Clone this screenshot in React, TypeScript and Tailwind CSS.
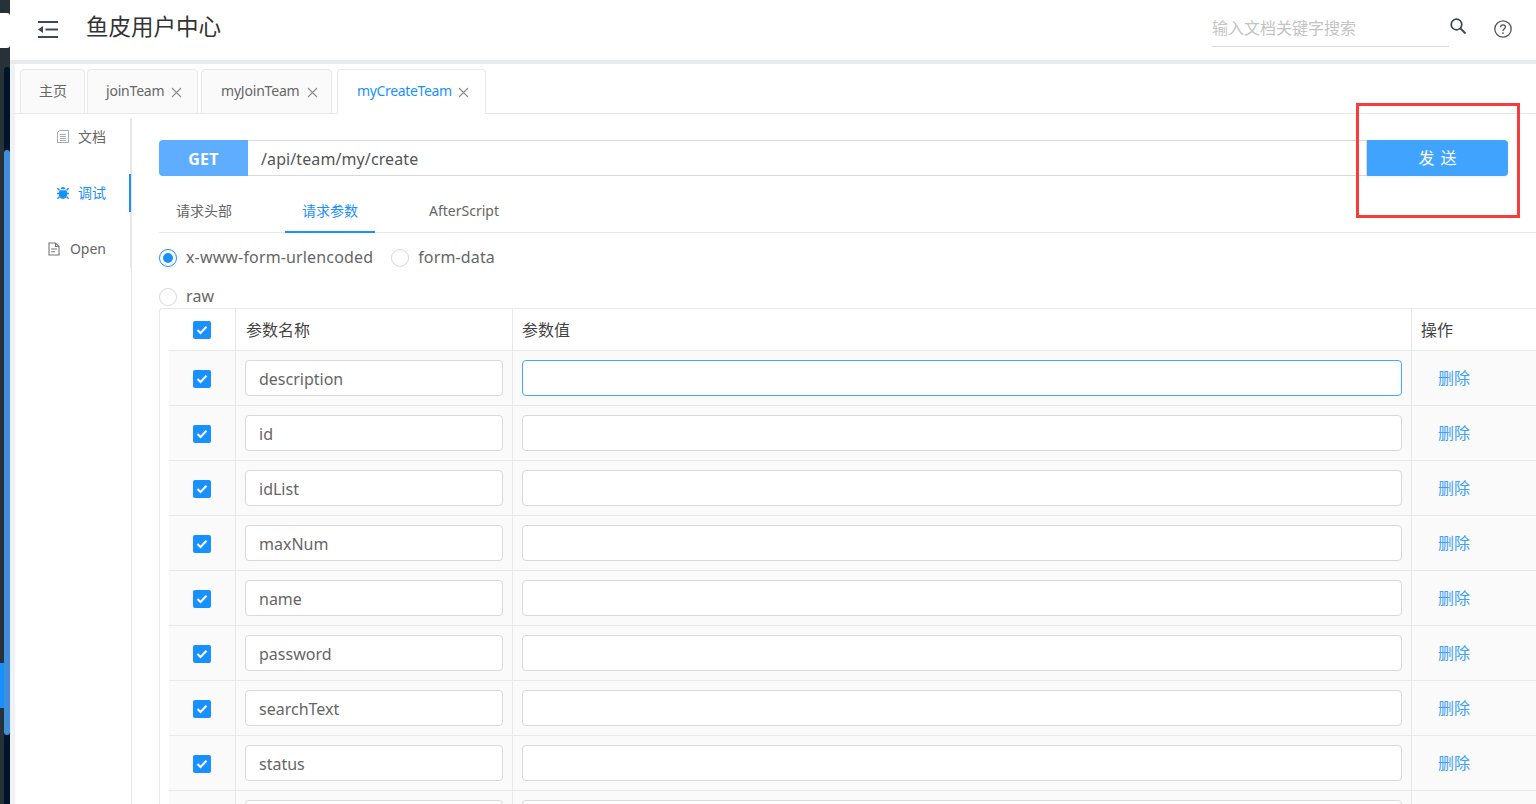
import React from "react";

const rows = ["description", "id", "idList", "maxNum", "name", "password", "searchText", "status", ""];

function Check() {
  return (
    <span className="flex h-[18px] w-[18px] items-center justify-center rounded-[2px] bg-[#1890ff]">
      <svg width="12" height="10" viewBox="0 0 12 10" fill="none">
        <path d="M1.5 5l3 3 6-6.2" stroke="#fff" strokeWidth="2" />
      </svg>
    </span>
  );
}

function Radio({ on, label }: { on?: boolean; label: string }) {
  return (
    <span className="flex items-center">
      <span className={`flex h-[18px] w-[18px] items-center justify-center rounded-full border ${on ? "border-[#1890ff]" : "border-[#d9d9d9]"}`}>
        {on && <span className="h-[10px] w-[10px] rounded-full bg-[#1890ff]" />}
      </span>
      <span className="-mt-[2px] ml-[9px] text-[16px] tracking-[0.15px] text-[#666]">{label}</span>
    </span>
  );
}

function Close({ cls }: { cls: string }) {
  return (
    <svg width="11" height="11" viewBox="0 0 11 11" className={`mt-[4px] ${cls}`} fill="none">
      <path d="M1 1l9 9M10 1l-9 9" stroke="#8c8c8c" strokeWidth="1.1" />
    </svg>
  );
}

function Tab({ label, w, active, closeCls, cls }: { label: string; w: string; active?: boolean; closeCls?: string; cls: string }) {
  return (
    <div
      className={`-mb-px flex h-[45px] items-center rounded-t-[4px] border border-[#e8e8e8] pb-[2px] text-[14px] ${w} ${cls} ${
        active ? "border-b-white bg-white text-[#1890ff]" : "bg-[#fafafa] text-[#666]"
      }`}
    >
      {label}
      {closeCls && <Close cls={closeCls} />}
    </div>
  );
}

export default function App() {
  return (
    <div className="relative flex h-[804px] w-[1536px] overflow-hidden bg-white font-['Noto_Sans','Noto_Sans_CJK_SC',sans-serif]">
      {/* window edge */}
      <div className="flex h-full w-[10px] shrink-0">
        <div className="flex w-[4px] flex-col bg-[#263238]">
          <div className="mt-[13px] h-[35px] bg-white" />
          <div className="mt-[615px] h-[45px] bg-[#1890ff]" />
        </div>
        <div className="w-[6px] bg-[#263238]">
          <div className="mt-[13px] h-[35px] rounded-r-[3px] bg-white" />
          <div className="mt-[19px] h-[737px] rounded-t-[3px] bg-[#001529]">
            <div className="relative top-[83px] h-[585px] rounded-[3px] bg-[#418fdc]" />
          </div>
        </div>
      </div>

      <div className="flex min-w-0 flex-1 flex-col">
        {/* header */}
        <header className="flex h-[60px] shrink-0 items-center bg-white">
          <svg width="20" height="17" viewBox="0 0 20 17" className="ml-[28px] -mt-[1px]" fill="none">
            <path d="M0 1h20M7.500 8.500h12.500M0 16h20" stroke="#3a4a5c" strokeWidth="2" />
            <path d="M0 8.500l5-3.500v7z" fill="#3a4a5c" />
          </svg>
          <h1 className="ml-[28px] pb-[6px] text-[22.5px] font-normal leading-none text-[#333]">鱼皮用户中心</h1>
          <div className="ml-auto flex items-start self-start">
            <div className="mt-[12px] h-[35px] w-[237px] border-b border-[#d9d9d9] pt-[3px] text-[16px] leading-[26px] text-[#c4c4c4]">
              输入文档关键字搜索
            </div>
            <svg width="18" height="18" viewBox="0 0 18 18" className="mt-[17px]" fill="none">
              <circle cx="7.500" cy="7.500" r="5.300" stroke="#37474f" strokeWidth="1.700" />
              <path d="M11.500 11.500l5 5" stroke="#37474f" strokeWidth="1.800" />
            </svg>
            <svg width="18" height="18" viewBox="0 0 18 18" className="ml-[27px] mr-[24px] mt-[20px]" fill="none">
              <circle cx="9" cy="9" r="8.200" stroke="#555" strokeWidth="1.300" />
              <path d="M6.600 7.200c0-1.400 1-2.300 2.400-2.300s2.400.9 2.400 2.200c0 1.900-2.400 1.900-2.400 3.800" stroke="#555" strokeWidth="1.300" />
              <circle cx="9" cy="13.100" r=".9" fill="#555" />
            </svg>
          </div>
        </header>

        <div className="flex min-h-0 flex-1">
          <div className="w-[5px] shrink-0 border-t-[4px] border-[#e8eaec] bg-[#f0f2f5]" />
          <div className="flex min-w-0 flex-1 flex-col border-t-[4px] border-[#e8eaec]">
            {/* tabs */}
            <div className="flex h-[50px] shrink-0 items-end border-b border-[#e8e8e8] pl-[5px]">
              <Tab label="主页" w="w-[65px]" cls="mr-[2px] pl-[18px]" />
              <Tab label="joinTeam" w="w-[111px]" closeCls="ml-[7px]" cls="mr-[3px] pl-[18px] tracking-[-0.2px]" />
              <Tab label="myJoinTeam" w="w-[131px]" closeCls="ml-[8px]" cls="mr-[5px] pl-[19px] tracking-[-0.2px]" />
              <Tab label="myCreateTeam" w="w-[149px]" active closeCls="ml-[6px]" cls="pl-[19px] tracking-[-0.35px]" />
            </div>

            <div className="flex min-h-0 flex-1">
              {/* side nav */}
              <aside className="mt-[4px] w-[117px] shrink-0 border-r border-[#e8e8e8]">
                <nav className="h-[150px] border-r border-[#e8e8e8] text-[14px]">
                  <div className="-mr-px flex h-[38px] items-center justify-end pb-[2px] pr-[25px] text-[#666]">
                    <svg width="12" height="13" viewBox="0 0 12 13" className="mr-[9px]" fill="none">
                      <path d="M2.500.5h9v12h-11v-10z" stroke="#aaa" strokeWidth="1" />
                      <path d="M3 4.500h6M3 6.500h6M3 8.500h6M3 10.500h6" stroke="#aaa" strokeWidth="1" />
                    </svg>
                    文档
                  </div>
                  <div className="-mr-px mt-[18px] flex h-[38px] items-center justify-end border-r-2 border-[#1890ff] pb-[2px] pr-[23px] text-[#1890ff]">
                    <svg width="14" height="14" viewBox="0 0 14 14" className="mr-[8px] mt-[2px]" fill="#1890ff">
                      <path d="M4.600 3.200C4.800 1.800 5.800 1 7 1s2.200.8 2.400 2.200zM3.700 4.200h6.600c.7 1 .9 2 .9 3.600 0 3-1.700 5.200-4.200 5.200S2.800 10.800 2.800 7.800c0-1.600.2-2.600.9-3.600z" />
                      <path d="M1.400 2.200l2 1.900M12.600 2.200l-2 1.900M1 7.500h2M13 7.500h-2M1.400 12.800l2-2M12.600 12.800l-2-2" stroke="#1890ff" strokeWidth="1.500" />
                    </svg>
                    调试
                  </div>
                  <div className="-mr-px mt-[18px] flex h-[38px] items-center justify-end pb-[2px] pr-[25px] text-[#666]">
                    <svg width="12" height="14" viewBox="0 0 12 14" className="mr-[10px] mt-[2px]" fill="none">
                      <path d="M1 1h6.500L11 4.500V13H1z" stroke="#777" strokeWidth="1.100" />
                      <path d="M7.500 1v3.500H11M3 7h6M3 9.800h4" stroke="#777" strokeWidth="1.100" />
                    </svg>
                    Open
                  </div>
                </nav>
              </aside>

              {/* main */}
              <main className="min-w-0 flex-1 pl-[27px] pt-[26px]">
                <div className="flex h-[36px] items-stretch">
                  <div className="flex w-[89px] items-center justify-center rounded-l-[4px] bg-[#5fadff] pt-[2px] text-[16px] font-bold tracking-[0.2px] text-white">GET</div>
                  <div className="flex flex-1 items-center border-y border-r border-[#d9d9d9] pl-[13px] pt-[2px] text-[16px] tracking-[0.1px] text-[#555]">/api/team/my/create</div>
                  <div className="flex w-[141px] items-center justify-center rounded-r-[4px] bg-[#40a4ff] pl-[6px] text-[16px] tracking-[6px] text-white shadow-[0_2px_0_rgba(0,0,0,0.03)]">
                    发送
                  </div>
                  <div className="w-[28px] shrink-0" />
                </div>

                <div className="mt-[14px] flex h-[43px] border-b border-[#e8e8e8] text-[14px] text-[#666]">
                  <div className="flex w-[90px] items-center justify-center pb-[1px]">请求头部</div>
                  <div className="ml-[36px] flex h-[43px] w-[90px] items-center justify-center border-b-2 border-[#1890ff] text-[#1890ff]">请求参数</div>
                  <div className="ml-[44px] flex w-[90px] items-center justify-center pb-[1px]">AfterScript</div>
                </div>

                <div className="flex h-[49px] items-center gap-[18px] pt-[1px]">
                  <Radio on label="x-www-form-urlencoded" />
                  <Radio label="form-data" />
                </div>
                <div className="flex h-[26px] items-center pt-[4px]">
                  <Radio label="raw" />
                </div>

                {/* param table */}
                <div className="rounded-tl-[4px] border-l border-t border-[#e8e8e8] pl-[9px]">
                  <div className="grid h-[42px] grid-cols-[67px_277px_899px_1fr] border-b border-[#e8e8e8] text-[16px] text-[#444]">
                    <div className="flex items-center justify-center border-r border-[#e8e8e8]"><Check /></div>
                    <div className="flex items-center border-r border-[#e8e8e8] pl-[10px]">参数名称</div>
                    <div className="flex items-center border-r border-[#e8e8e8] pl-[9px]">参数值</div>
                    <div className="flex items-center pl-[9px]">操作</div>
                  </div>
                  {rows.map((name, i) => (
                    <div key={i} className="grid h-[55px] grid-cols-[67px_277px_899px_1fr] border-b border-[#e8e8e8] bg-[#fafafa] text-[16px]">
                      <div className="flex items-center justify-center border-r border-[#e8e8e8] pt-[2px]"><Check /></div>
                      <div className="flex items-center border-r border-[#e8e8e8] px-[9px]">
                        <div className="flex h-[36px] w-full items-center rounded-[4px] border border-[#d9d9d9] bg-white pl-[13px] pt-[2px] text-[#666]">{name}</div>
                      </div>
                      <div className="flex items-center border-r border-[#e8e8e8] px-[9px]">
                        <div className={`h-[36px] w-full rounded-[4px] border bg-white ${i === 0 ? "border-[#40a9ff]" : "border-[#d9d9d9]"}`} />
                      </div>
                      <div className="flex items-center pl-[26px] text-[#40a0f8]">{name ? "删除" : ""}</div>
                    </div>
                  ))}
                </div>
              </main>
            </div>
          </div>
        </div>
      </div>

      {/* annotation drawn over the screenshot */}
      <div className="absolute left-[1356px] top-[103px] h-[115px] w-[164px] border-[3px] border-[#f83b3b]" />
    </div>
  );
}
